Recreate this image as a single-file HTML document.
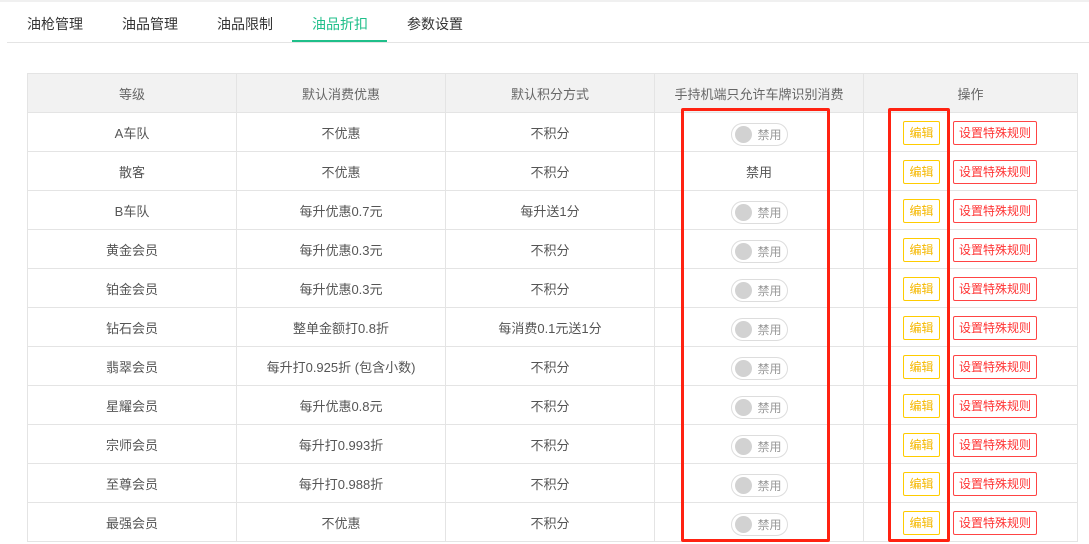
<!DOCTYPE html><html><head><meta charset="utf-8"><style>
*{margin:0;padding:0;box-sizing:border-box}
body{width:1089px;height:544px;overflow:hidden;background:#fff;font-family:"Liberation Sans","Noto Sans CJK SC",sans-serif;position:relative}
.top{position:absolute;left:0;top:0;width:1089px;height:2px;background:#f0f0f0}
.tabs{position:absolute;left:7px;top:0;width:1082px;height:43px;border-bottom:1px solid #e4e4e4}
.tab{position:absolute;top:14px;font-size:14px;color:#333}
.tab.on{color:#1fbf8a}
.ul{position:absolute;left:285px;top:40px;width:95px;height:2px;background:#1fbf8a}
table{position:absolute;left:27px;top:73px;border-collapse:collapse;width:1050px;table-layout:fixed}
td,th{border:1px solid #e4e4e4;height:39px;text-align:center;font-size:13px;color:#555;font-weight:normal}
th{background:#f2f2f2;color:#666}
.tg{display:inline-block;width:57px;height:23px;border:1px solid #ddd;border-radius:12px;position:relative;vertical-align:middle;font-size:12px;color:#999;line-height:23px;padding-left:26px;margin-top:4px;text-align:left}
.tg:before{content:"";position:absolute;left:3px;top:2px;width:17px;height:17px;border-radius:50%;background:#d2d2d2}
.e{display:inline-block;border:1px solid #fc0;color:#f5b800;font-size:12px;height:24px;line-height:22px;width:37px;border-radius:2px;vertical-align:middle;text-align:center;margin-top:2px}
.s{display:inline-block;border:1px solid #f44;color:#f33;font-size:12px;height:24px;line-height:22px;width:84px;border-radius:2px;margin-left:13px;vertical-align:middle;text-align:center;margin-top:2px}
.ops{text-align:left;padding-left:39px;white-space:nowrap}
.rb{position:absolute;border:3px solid #f21;border-radius:2px}
</style></head><body>
<div class="top"></div>
<div class="tabs">
<span class="tab" style="left:20px">油枪管理</span>
<span class="tab" style="left:115px">油品管理</span>
<span class="tab" style="left:210px">油品限制</span>
<span class="tab on" style="left:305px">油品折扣</span>
<span class="tab" style="left:400px">参数设置</span>
<div class="ul"></div>
</div>
<table>
<colgroup><col style="width:209px"><col style="width:209px"><col style="width:209px"><col style="width:209px"><col style="width:214px"></colgroup>
<tr><th>等级</th><th>默认消费优惠</th><th>默认积分方式</th><th>手持机端只允许车牌识别消费</th><th>操作</th></tr>
<tr><td>A车队</td><td>不优惠</td><td>不积分</td><td><span class="tg">禁用</span></td><td class="ops"><span class="e">编辑</span><span class="s">设置特殊规则</span></td></tr>
<tr><td>散客</td><td>不优惠</td><td>不积分</td><td>禁用</td><td class="ops"><span class="e">编辑</span><span class="s">设置特殊规则</span></td></tr>
<tr><td>B车队</td><td>每升优惠0.7元</td><td>每升送1分</td><td><span class="tg">禁用</span></td><td class="ops"><span class="e">编辑</span><span class="s">设置特殊规则</span></td></tr>
<tr><td>黄金会员</td><td>每升优惠0.3元</td><td>不积分</td><td><span class="tg">禁用</span></td><td class="ops"><span class="e">编辑</span><span class="s">设置特殊规则</span></td></tr>
<tr><td>铂金会员</td><td>每升优惠0.3元</td><td>不积分</td><td><span class="tg">禁用</span></td><td class="ops"><span class="e">编辑</span><span class="s">设置特殊规则</span></td></tr>
<tr><td>钻石会员</td><td>整单金额打0.8折</td><td>每消费0.1元送1分</td><td><span class="tg">禁用</span></td><td class="ops"><span class="e">编辑</span><span class="s">设置特殊规则</span></td></tr>
<tr><td>翡翠会员</td><td>每升打0.925折 (包含小数)</td><td>不积分</td><td><span class="tg">禁用</span></td><td class="ops"><span class="e">编辑</span><span class="s">设置特殊规则</span></td></tr>
<tr><td>星耀会员</td><td>每升优惠0.8元</td><td>不积分</td><td><span class="tg">禁用</span></td><td class="ops"><span class="e">编辑</span><span class="s">设置特殊规则</span></td></tr>
<tr><td>宗师会员</td><td>每升打0.993折</td><td>不积分</td><td><span class="tg">禁用</span></td><td class="ops"><span class="e">编辑</span><span class="s">设置特殊规则</span></td></tr>
<tr><td>至尊会员</td><td>每升打0.988折</td><td>不积分</td><td><span class="tg">禁用</span></td><td class="ops"><span class="e">编辑</span><span class="s">设置特殊规则</span></td></tr>
<tr><td>最强会员</td><td>不优惠</td><td>不积分</td><td><span class="tg">禁用</span></td><td class="ops"><span class="e">编辑</span><span class="s">设置特殊规则</span></td></tr>
</table>
<div class="rb" style="left:681px;top:108px;width:149px;height:434px"></div>
<div class="rb" style="left:888px;top:108px;width:62px;height:434px"></div>
</body></html>
